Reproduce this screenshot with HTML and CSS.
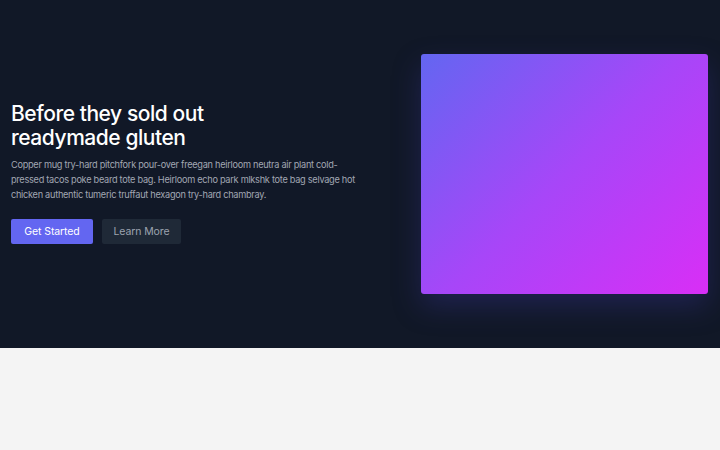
FILE: index.html
```html
<!DOCTYPE html>
<html lang="en">
<head>
  <meta charset="UTF-8" />
  <meta name="viewport" content="width=device-width, initial-scale=1" />
  <title>Hero</title>
  <link rel="stylesheet" href="styles.css">
</head>
<body>
  <section class="hero">
    <div class="hero-text">
      <h1>Before they sold out<br>readymade gluten</h1>
      <p>Copper mug try-hard pitchfork pour-over freegan heirloom neutra air plant cold-pressed tacos poke beard tote bag. Heirloom echo park mlkshk tote bag selvage hot chicken authentic tumeric truffaut hexagon try-hard chambray.</p>
      <div class="actions">
        <button class="btn btn-primary">Get Started</button>
        <button class="btn btn-secondary">Learn More</button>
      </div>
    </div>
    <div class="hero-art">
      <div class="art-box"></div>
    </div>
  </section>
  <section class="below"></section>
</body>
</html>
```

FILE: styles.css
```css
body, html {
  margin: 0;
  padding: 0;
  background: #f4f4f4;
  font-family: Inter, 'Noto Sans', sans-serif;
}

.hero {
  display: flex;
  align-items: center;
  justify-content: space-between;
  background: #111827;
  padding: 54px 12px 54px 11px;
  height: 240px;
}

.hero-text {
  width: 352px;
  padding-bottom: 2px;
}

h1 {
  margin: 0 0 8px;
  font-size: 21px;
  font-weight: 500;
  line-height: 24px;
  color: #fff;
  letter-spacing: -0.45px;
}

p {
  margin: 0 0 16px;
  font-size: 9.2px;
  line-height: 14.7px;
  color: #a1a7b3;
  letter-spacing: -0.28px;
}

.actions {
  display: flex;
  gap: 9px;
}

.btn {
  border: none;
  border-radius: 2px;
  height: 25px;
  font-family: inherit;
  font-size: 10.5px;
  letter-spacing: -0.1px;
}

.btn-primary {
  width: 82px;
  background: #6366f1;
  color: #fff;
}

.btn-secondary {
  width: 79px;
  background: #1f2937;
  color: #9ca3af;
}

.art-box {
  width: 287px;
  height: 240px;
  border-radius: 3px;
  background: linear-gradient(135deg, #6366f1 0%, #a746f8 50%, #d92ef6 100%);
  box-shadow: 0 12px 28px rgba(49, 46, 129, 0.45);
}

.below {
  height: 102px;
}
```
